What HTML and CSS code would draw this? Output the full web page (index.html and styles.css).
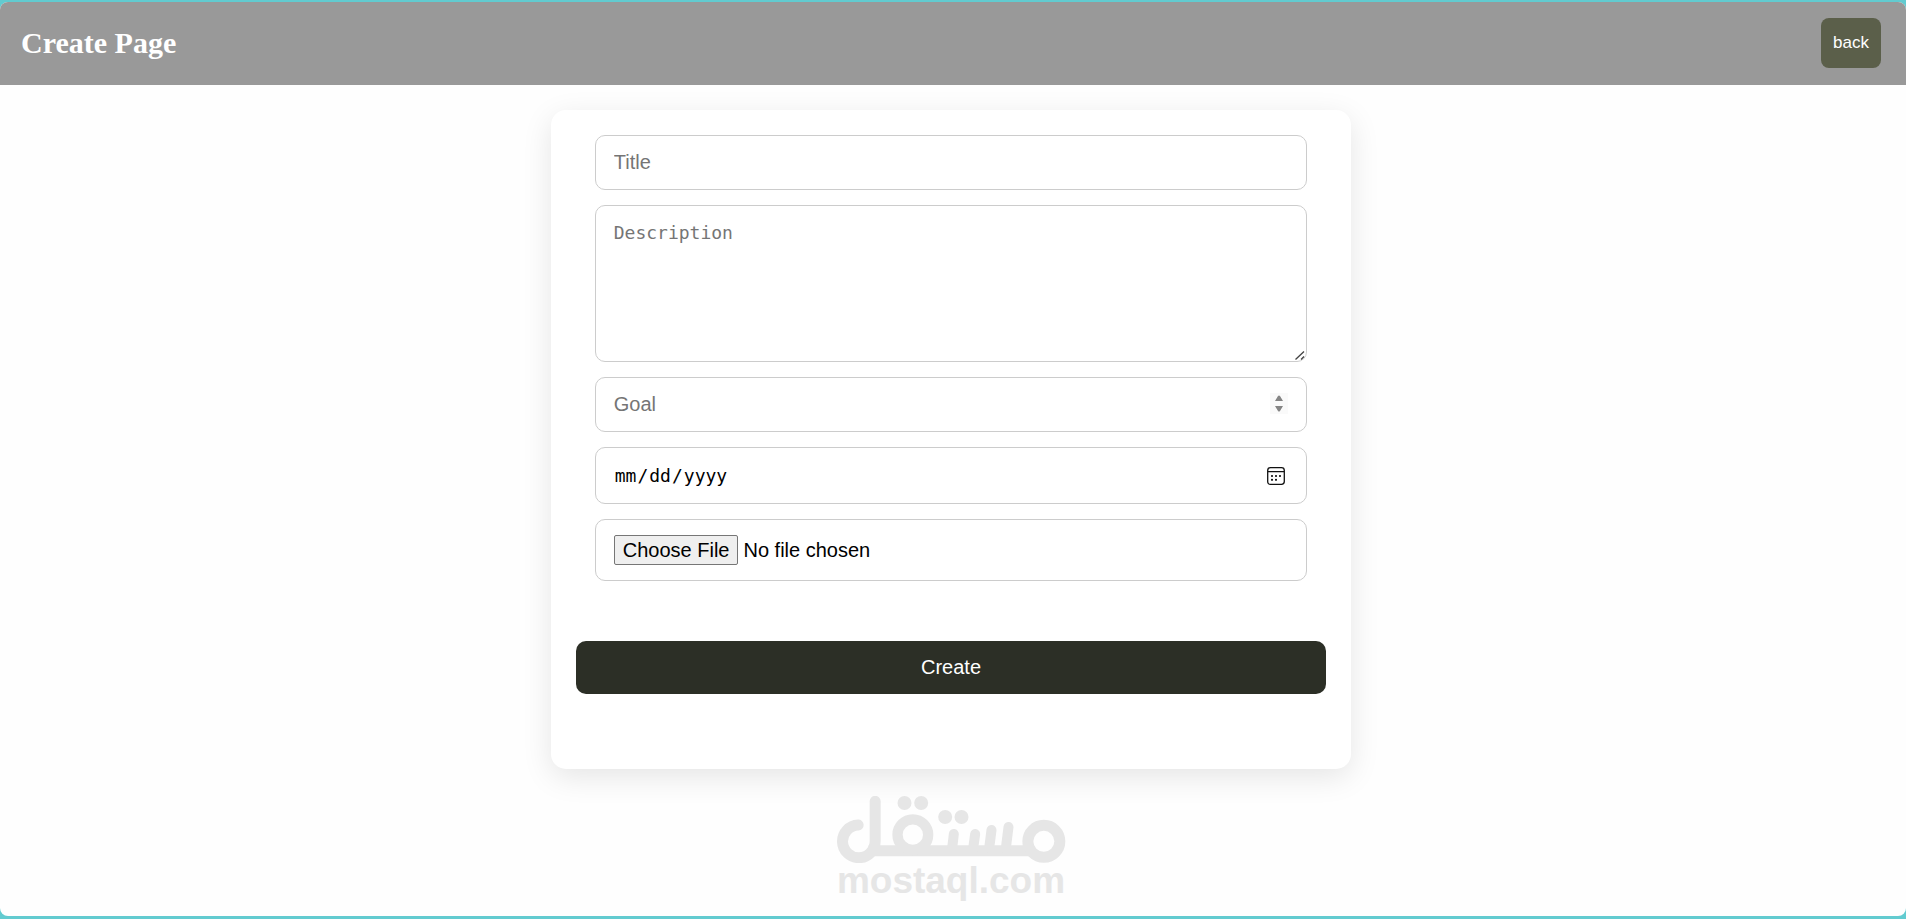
FILE: index.html
```
<!DOCTYPE html>
<html lang="en">

<head>
    <meta charset="UTF-8">
    <meta name="viewport" content="width=device-width, initial-scale=1.0">
    <title>Create Page</title>
    <link rel="stylesheet" href="styles.css">
</head>

<body>

    <div class="page">
        <header class="header">
            <h1>Create Page</h1>
            <a class="back-btn" href="#">back</a>
        </header>

        <main class="content">
            <!-- Create form -->
            <form class="create-form">
                <input type="text" id="title" placeholder="Title" aria-label="Title">
                <textarea id="description" placeholder="Description" aria-label="Description"></textarea>
                <input type="number" id="goal" placeholder="Goal" aria-label="Goal">
                <input type="date" id="date" aria-label="Date">
                <input type="file" id="image" aria-label="Image">
                <button type="submit">Create</button>
            </form>

            <!-- Site logo -->
            <div class="logo">
                <svg viewBox="54 48 687 201" role="img" aria-label="مستقل">
                    <g fill="none" stroke="#e6e6e6" stroke-linecap="round">
                        <path stroke-width="33" d="M119 135a49 49 0 1 0 51 49V64" />
                        <path stroke-width="33" stroke-linecap="butt" d="M150 212H640" />
                        <circle stroke-width="31" cx="283" cy="164" r="46" />
                        <circle stroke-width="33" cx="676" cy="184" r="48" />
                        <path stroke-width="30" d="M406 162l-5 43M470 162l-6 43M519 150l-7 55M570 141l-8 64" />
                    </g>
                    <g fill="#e6e6e6">
                        <circle cx="258" cy="69" r="21" />
                        <circle cx="308" cy="69" r="21" />
                        <circle cx="380" cy="111" r="21" />
                        <circle cx="429" cy="111" r="21" />
                    </g>
                </svg>
                <span>mostaql.com</span>
            </div>
        </main>
    </div>

</body>

</html>
```
FILE: styles.css
```
* {
    box-sizing: border-box;
}

body {
    margin: 0;
    padding: 2px 0 3px;
    background-color: #62cbd0;
    font-family: Arial, "Liberation Sans", sans-serif;
}

.page {
    min-height: calc(100vh - 5px);
    background-color: #fefefe;
    border-radius: 8px;
    overflow: hidden;
}

.header {
    display: flex;
    justify-content: space-between;
    align-items: center;
    padding: 16px 25px 17px 21px;
    background-color: #999;
}

.header h1 {
    margin: 0;
    color: #fff;
    font-family: "Times New Roman", "Liberation Serif", serif;
    font-size: 30px;
}

.back-btn {
    padding: 15px 12px;
    background-color: #5b5f4a;
    border-radius: 8px;
    color: #fff;
    font-size: 17px;
    line-height: 20px;
    text-decoration: none;
}

.content {
    display: flex;
    flex-direction: column;
    align-items: center;
    padding: 25px 4px 0 0;
}

.create-form {
    display: flex;
    flex-direction: column;
    align-items: center;
    gap: 15px;
    width: 100%;
    max-width: 800px;
    padding: 25px 25px 75px;
    background-color: #fff;
    border-radius: 15px;
    box-shadow: 0 8px 30px rgba(0, 0, 0, 0.1);
}

input,
textarea {
    width: 95%;
    padding: 15px 18px;
    background-color: #fff;
    border: 1px solid #ccc;
    border-radius: 10px;
    font-family: Arial, "Liberation Sans", sans-serif;
    font-size: 20px;
}

::placeholder {
    color: #757575;
}

textarea {
    height: 157px;
    font-family: Consolas, "DejaVu Sans Mono", monospace;
    font-size: 18px;
    line-height: 23px;
    resize: vertical;
}

textarea::-webkit-resizer {
    background: url("data:image/svg+xml,%3Csvg xmlns='http://www.w3.org/2000/svg' width='15' height='15' fill='none' stroke='%23444' stroke-width='1.3'%3E%3Cpath d='M4.5 13.5l8.5-8M10 13.5l3-3'/%3E%3C/svg%3E") no-repeat right bottom;
}

input[type="number"]::-webkit-inner-spin-button {
    -webkit-appearance: none;
    width: 18px;
    height: 21px;
    background: #fafafa url("data:image/svg+xml,%3Csvg xmlns='http://www.w3.org/2000/svg' width='18' height='21' fill='%23858585'%3E%3Cpath d='M5 8l3-5q1-1 2 0l3 5zM5 13h8l-3 5q-1 1-2 0z'/%3E%3C/svg%3E") no-repeat center;
    opacity: 1;
}

input[type="date"] {
    height: 57px;
    font-family: Consolas, "DejaVu Sans Mono", monospace;
    font-size: 18px;
}

input[type="date"]::-webkit-calendar-picker-indicator {
    width: 18px;
    height: 18px;
    margin-right: 3px;
    padding: 0;
    background: url("data:image/svg+xml,%3Csvg xmlns='http://www.w3.org/2000/svg' viewBox='0 0 18 18'%3E%3Cpath fill='none' stroke='%23111' stroke-width='1.3' d='M3.5.7h11q2.8 0 2.8 2.8v11q0 2.8-2.8 2.8h-11q-2.8 0-2.8-2.8v-11Q.7.7 3.5.7zM.7 4.7h16.6'/%3E%3Cpath stroke='%23111' stroke-width='2.2' stroke-linecap='round' d='M5 9h.01M9 9h.01M13 9h.01M5 12.8h.01M9 12.8h.01'/%3E%3C/svg%3E") no-repeat center;
}

input[type="file"] {
    height: 62px;
}

input[type="file"]::file-selector-button {
    height: 30px;
    margin-right: 5px;
    padding: 1px 8px;
    background-color: #efefef;
    border: 1px solid #767676;
    border-radius: 2px;
    font-size: 20px;
}

button {
    width: 100%;
    margin-top: 45px;
    padding: 15px;
    background-color: #2c2f26;
    border: none;
    border-radius: 10px;
    color: #fff;
    font-family: Arial, "Liberation Sans", sans-serif;
    font-size: 20px;
    cursor: pointer;
}

.logo {
    display: flex;
    flex-direction: column;
    align-items: center;
    margin-top: 27px;
    color: #e6e6e6;
    font-size: 37px;
    font-weight: bold;
    line-height: 36px;
}

.logo svg {
    width: 230px;
    height: 67px;
}
```
